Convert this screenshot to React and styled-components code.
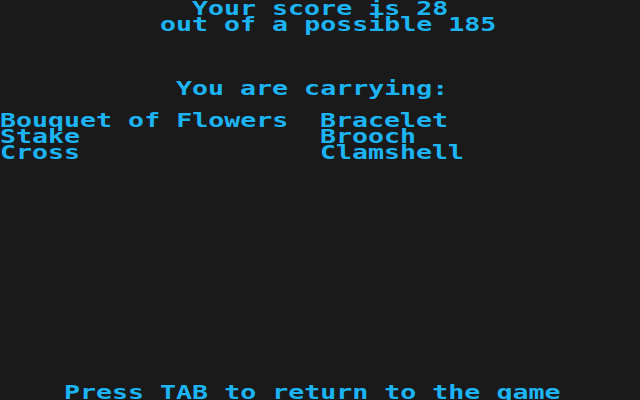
import React from "react";
import styled, { createGlobalStyle } from "styled-components";

const CELL = 16;

const GlobalStyle = createGlobalStyle`
  html, body {
    margin: 0;
    padding: 0;
    background: #1a1a1a;
  }
`;

const Screen = styled.div`
  width: 640px;
  height: 400px;
  background: #1a1a1a;
  display: flex;
  flex-direction: column;
  overflow: hidden;
  color: #1db4f3;
  font-family: "DejaVu Sans Mono", "Liberation Mono", monospace;
  font-weight: bold;
  font-size: 19px;
`;

const Line = styled.div`
  height: ${CELL}px;
  line-height: ${CELL}px;
  padding-left: ${(p) => (p.$col || 0) * CELL}px;
  margin-top: ${(p) => (p.$skip || 0) * CELL}px;
  white-space: pre;
`;

// 19px mono advances ~11.44px; stretch to a 16px cell like the old 40-column screen
const Text = styled.span`
  display: inline-block;
  transform: scaleX(1.4);
  transform-origin: left center;
  letter-spacing: 0;
`;

const Inventory = styled.div`
  margin-top: ${CELL}px;
  display: grid;
  grid-template-columns: ${CELL * 20}px ${CELL * 20}px;
  grid-auto-rows: ${CELL}px;
`;

const Footer = styled(Line)`
  margin-top: auto;
`;

const items = [
  "Bouquet of Flowers",
  "Bracelet",
  "Stake",
  "Brooch",
  "Cross",
  "Clamshell",
];

export default function App() {
  return (
    <>
      <GlobalStyle />
      <Screen>
        <Line $col={12}>
          <Text>Your score is 28</Text>
        </Line>
        <Line $col={10}>
          <Text>out of a possible 185</Text>
        </Line>
        <Line $col={11} $skip={3}>
          <Text>You are carrying:</Text>
        </Line>
        <Inventory>
          {items.map((item) => (
            <Line key={item}>
              <Text>{item}</Text>
            </Line>
          ))}
        </Inventory>
        <Footer $col={4}>
          <Text>Press TAB to return to the game</Text>
        </Footer>
      </Screen>
    </>
  );
}
